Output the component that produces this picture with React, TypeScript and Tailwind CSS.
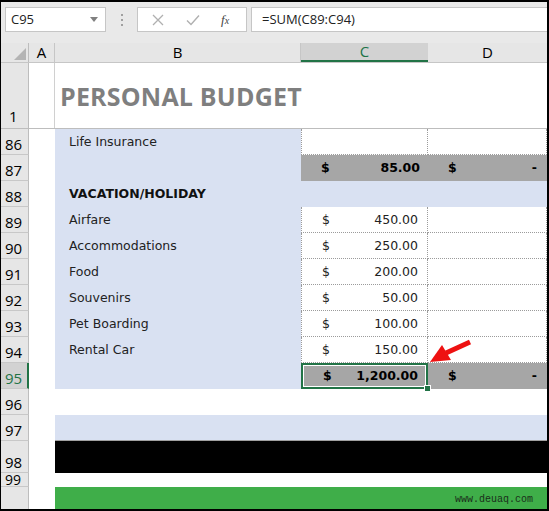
import React from "react";

const BLUE = "bg-[#d9e1f2]";

function RowHead({ n, h, active }: { n: string; h: string; active?: boolean }) {
  return (
    <div
      className={`${h} w-[28px] shrink-0 flex items-end pl-[4px] pb-[1px] text-[15px] leading-[18px] border-b border-[#c8c8c8] ${
        active
          ? "bg-[#d2d2d2] text-[#217346] border-r-2 border-r-[#217346]"
          : "bg-[#e6e6e6] text-black border-r border-r-[#bdbdbd]"
      }`}
      style={{ fontFamily: "'Open Sans', 'Noto Sans', sans-serif" }}
    >
      {n}
    </div>
  );
}

const cellFont = { fontFamily: "'DejaVu Sans', 'Liberation Sans', sans-serif" };

function WhitePair({ amt }: { amt?: string }) {
  return (
    <>
      <div
        className="w-[127px] shrink-0 h-full bg-white border-l border-r border-b border-dotted border-[#9b9b9b] flex items-center justify-between pl-[20px] pr-[9px] pt-[1px] text-[12.5px] text-[#222]"
        style={cellFont}
      >
        {amt ? (
          <>
            <span>$</span>
            <span>{amt}</span>
          </>
        ) : null}
      </div>
      <div className="flex-1 h-full bg-white border-r border-b border-dotted border-[#9b9b9b]" />
    </>
  );
}

function GrayPair({ amt, selected }: { amt: string; selected?: boolean }) {
  return (
    <>
      <div
        className={`relative w-[127px] shrink-0 h-full bg-[#a6a6a6] flex items-center justify-between pl-[20px] pr-[8px] pt-[1px] text-[12.5px] font-bold text-black ${
          selected ? "border-2 border-[#217346] outline outline-1 outline-offset-[-3px] outline-white" : ""
        }`}
        style={cellFont}
      >
        <span>$</span>
        <span>{amt}</span>
        {selected ? (
          <div className="absolute right-[-5px] bottom-[-5px] w-[7px] h-[7px] bg-[#217346] border border-white" />
        ) : null}
      </div>
      <div
        className="flex-1 h-full bg-[#a6a6a6] flex items-center justify-between pl-[20px] pr-[10px] pt-[1px] text-[12.5px] font-bold text-black"
        style={cellFont}
      >
        <span>$</span>
        <span>-</span>
      </div>
    </>
  );
}

function Row({
  n,
  h = "h-[26px]",
  active,
  children,
}: {
  n: string;
  h?: string;
  active?: boolean;
  children?: React.ReactNode;
}) {
  return (
    <div className={`flex ${h} w-full`}>
      <RowHead n={n} h={h} active={active} />
      <div className="w-[26px] shrink-0 bg-white" />
      <div className="flex flex-1 h-full min-w-0">{children}</div>
    </div>
  );
}

function BCell({ text, bold }: { text?: string; bold?: boolean }) {
  return (
    <div
      className={`w-[246px] shrink-0 h-full ${BLUE} flex items-center pl-[14px] pt-[1px] text-[12.5px] text-[#222] ${
        bold ? "font-bold" : ""
      }`}
      style={cellFont}
    >
      {text}
    </div>
  );
}

export default function App() {
  const items: [string, string, string][] = [
    ["89", "Airfare", "450.00"],
    ["90", "Accommodations", "250.00"],
    ["91", "Food", "200.00"],
    ["92", "Souvenirs", "50.00"],
    ["93", "Pet Boarding", "100.00"],
    ["94", "Rental Car", "150.00"],
  ];
  return (
    <div className="relative w-[549px] h-[511px] overflow-hidden bg-black">
      <div className="absolute left-[1px] top-[2px] right-[2px] bottom-[2px] bg-white flex flex-col overflow-hidden">
        {/* formula bar */}
        <div
          className="h-[41px] shrink-0 bg-[#e9e9e9] flex items-start pt-[5px]"
          style={{ fontFamily: "'Open Sans', 'Noto Sans', sans-serif" }}
        >
          <div className="ml-[4px] w-[101px] h-[25px] bg-white border border-[#c6c6c6] flex items-center justify-between pl-[5px] pr-[7px] text-[13px] text-[#222]">
            <span>C95</span>
            <svg width="8" height="5" viewBox="0 0 8 5">
              <path d="M0 0 L8 0 L4 5 Z" fill="#808080" />
            </svg>
          </div>
          <div className="w-[31px] h-[25px] flex flex-col items-center justify-center gap-[3px]">
            <div className="w-[2px] h-[2px] bg-[#a0a0a0]" />
            <div className="w-[2px] h-[2px] bg-[#a0a0a0]" />
            <div className="w-[2px] h-[2px] bg-[#a0a0a0]" />
          </div>
          <div className="w-[110px] h-[25px] bg-white border border-[#c6c6c6] flex items-center">
            <svg className="ml-[14px]" width="12" height="12" viewBox="0 0 12 12">
              <path d="M1 1 L11 11 M11 1 L1 11" stroke="#b0b0b0" strokeWidth="1.3" />
            </svg>
            <svg className="ml-[22px]" width="14" height="12" viewBox="0 0 14 12">
              <path d="M1 6.5 L5 10.5 L13 1.5" stroke="#b0b0b0" strokeWidth="1.4" fill="none" />
            </svg>
            <span
              className="ml-[21px] text-[13px] italic text-[#444]"
              style={{ fontFamily: "'Liberation Serif', serif" }}
            >
              f<span className="text-[10px]">x</span>
            </span>
          </div>
          <div className="ml-[4px] flex-1 h-[25px] bg-white border border-[#c6c6c6] border-r-0 flex items-center pl-[10px] text-[13px] text-[#222]">
            =SUM(C89:C94)
          </div>
        </div>
        {/* column headers */}
        <div
          className="h-[20px] shrink-0 flex bg-[#e6e6e6] border-b border-[#c6c6c6] text-[15px] text-black"
          style={{ fontFamily: "'Open Sans', 'Noto Sans', sans-serif" }}
        >
          <div className="w-[28px] shrink-0 border-r border-[#bdbdbd] flex items-end justify-end pr-[2px] pb-[2px]">
            <svg width="12" height="12" viewBox="0 0 12 12">
              <path d="M12 0 L12 12 L0 12 Z" fill="#b4b4b4" />
            </svg>
          </div>
          <div className="w-[26px] shrink-0 border-r border-[#c6c6c6] flex items-center justify-center">A</div>
          <div className="w-[246px] shrink-0 border-r border-[#c6c6c6] flex items-center justify-center">B</div>
          <div className="w-[127px] shrink-0 bg-[#d2d2d2] border-b-2 border-[#217346] text-[#217346] flex items-center justify-center">
            C
          </div>
          <div className="flex-1 flex items-center justify-center">D</div>
        </div>
        {/* row 1 */}
        <div className="flex h-[66px] w-full border-b border-[#bdbdbd]">
          <div
            className="w-[28px] shrink-0 bg-[#e6e6e6] border-r border-[#bdbdbd] flex items-end pl-[8px] pb-[1px] text-[15px]"
            style={{ fontFamily: "'Open Sans', 'Noto Sans', sans-serif" }}
          >
            1
          </div>
          <div className="w-[26px] shrink-0 border-r border-[#d0d0d0]" />
          <div
            className="flex-1 flex items-center pl-[5px] pt-[2px] text-[25px] font-bold text-[#7f7f7f] tracking-[0.2px]"
            style={{ fontFamily: "'Open Sans', sans-serif" }}
          >
            PERSONAL BUDGET
          </div>
        </div>
        <Row n="86">
          <BCell text="Life Insurance" />
          <WhitePair />
        </Row>
        <Row n="87">
          <BCell />
          <GrayPair amt="85.00" />
        </Row>
        <Row n="88">
          <div className={`flex-1 h-full ${BLUE} flex items-center pl-[14px] pt-[1px] text-[12.5px] font-bold text-[#111]`} style={cellFont}>
            VACATION/HOLIDAY
          </div>
        </Row>
        {items.map(([n, t, a]) => (
          <Row key={n} n={n}>
            <BCell text={t} />
            <WhitePair amt={a} />
          </Row>
        ))}
        <Row n="95" active>
          <BCell />
          <GrayPair amt="1,200.00" selected />
        </Row>
        <Row n="96">
          <div className="flex-1 h-full bg-white" />
        </Row>
        <Row n="97">
          <div className={`flex-1 h-full ${BLUE} border-b border-[#a0a0a0]`} />
        </Row>
        <Row n="98" h="h-[32px]">
          <div className="flex-1 h-full bg-black" />
        </Row>
        <div className="flex h-[14px] w-full">
          <div
            className="w-[28px] shrink-0 bg-[#e6e6e6] border-r border-[#bdbdbd] border-b border-b-[#c8c8c8] flex items-end pl-[4px] text-[14px] leading-[13px] overflow-hidden"
            style={{ fontFamily: "'Open Sans', 'Noto Sans', sans-serif" }}
          >
            99
          </div>
          <div className="flex-1 bg-white" />
        </div>
        <div className="flex flex-1 w-full">
          <div className="w-[28px] shrink-0 bg-[#e6e6e6] border-r border-[#bdbdbd]" />
          <div className="w-[26px] shrink-0 bg-white" />
          <div className="flex-1 bg-[#3fae49] flex items-center justify-end pr-[14px] pt-[2px]">
            <span
              className="text-[10px] text-[#1a2e1a]"
              style={{ fontFamily: "'Liberation Mono', monospace" }}
            >
              www.deuaq.com
            </span>
          </div>
        </div>
      </div>
      {/* red arrow */}
      <svg className="absolute left-[426px] top-[338px]" width="50" height="30" viewBox="0 0 50 30">
        <path d="M44 4 L20 15" stroke="#ee1111" strokeWidth="5" strokeLinecap="butt" />
        <path d="M4 24 L16 7 L25 22 Z" fill="#ee1111" />
      </svg>
    </div>
  );
}
